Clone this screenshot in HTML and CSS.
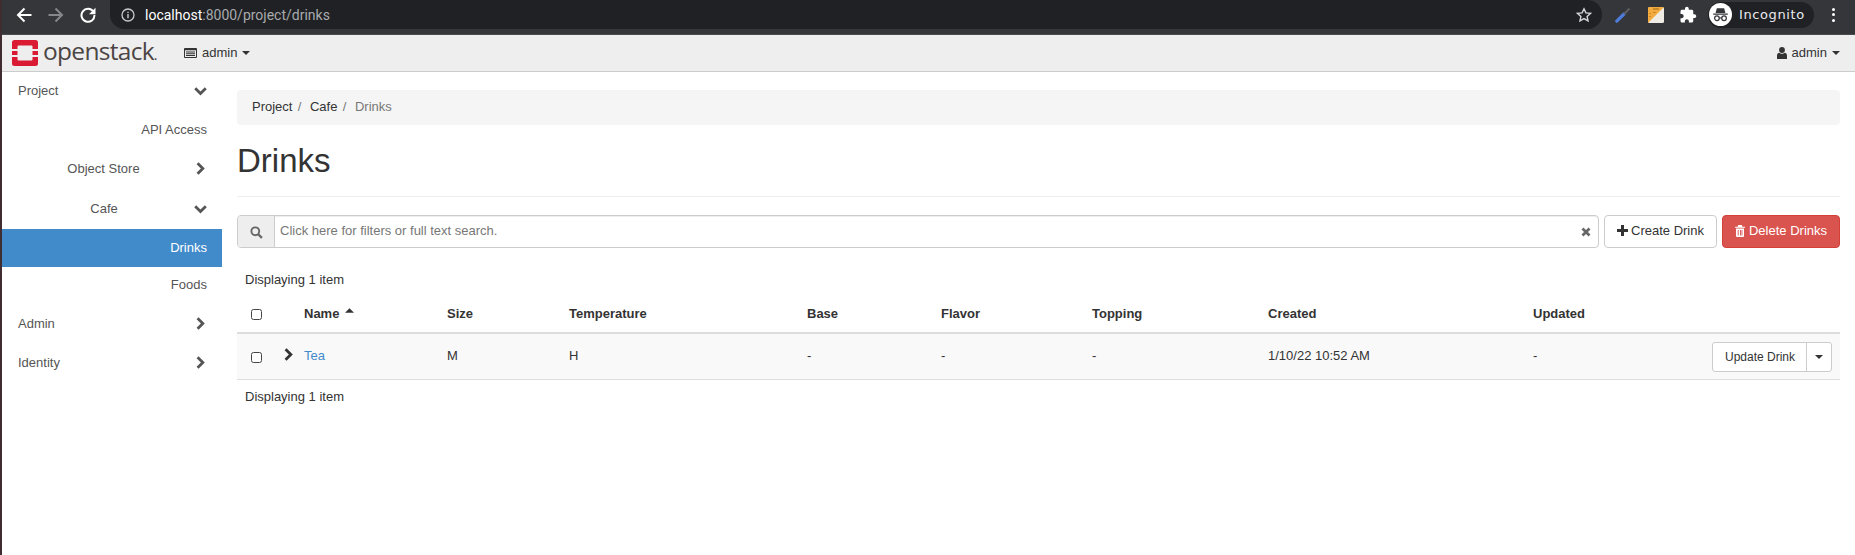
FILE: index.html
```html
<!DOCTYPE html>
<html lang="en">
<head>
<meta charset="utf-8">
<title>Drinks</title>
<link rel="stylesheet" href="styles.css">
</head>
<body>
<svg class="defs" width="0" height="0" aria-hidden="true">
  <symbol id="chev-right" viewBox="0 0 12 16"><path d="M3 1.500 9.500 8 3 14.500" fill="none" stroke="currentColor" stroke-width="3.400"/></symbol>
  <symbol id="chev-down" viewBox="0 0 16 12"><path d="M1.500 2.500 8 9l6.500-6.500" fill="none" stroke="currentColor" stroke-width="3.400"/></symbol>
  <symbol id="caret" viewBox="0 0 8 4"><path d="M0 0h8L4 4z" fill="currentColor"/></symbol>
</svg>
<header class="chrome">
  <div class="chrome-nav">
    <svg class="c-icon" viewBox="0 0 16 16"><path d="M15.500 8H2M8.500 1.500 2 8l6.500 6.500" fill="none" stroke="#fff" stroke-width="2"/></svg>
    <svg class="c-icon" viewBox="0 0 16 16"><path d="M.5 8H14M7.500 1.500 14 8l-6.500 6.500" fill="none" stroke="#85878a" stroke-width="2"/></svg>
    <svg class="c-icon" viewBox="0 0 16 16"><path d="M13.500 4.800A6.500 6.500 0 1 0 14.500 8" fill="none" stroke="#fff" stroke-width="2"/><path d="M15.500 .8v6.400H9z" fill="#fff"/></svg>
  </div>
  <div class="omnibox">
    <svg class="info" viewBox="0 0 14 14"><circle cx="7" cy="7" r="6" fill="none" stroke="#c8cacd" stroke-width="1.300"/><path d="M6.300 6h1.400v4.200H6.300zM6.300 3.700h1.400v1.400H6.300z" fill="#c8cacd"/></svg>
    <span class="url"><span class="url-host">localhost</span>:8000/project/drinks</span>
    <svg class="star" viewBox="0 0 16 16"><path d="m8 1.800 1.900 4.100 4.500.5-3.300 3 .9 4.400L8 11.600l-4 2.200.9-4.400-3.300-3 4.500-.5z" fill="none" stroke="#d5d7da" stroke-width="1.400"/></svg>
  </div>
  <div class="chrome-ext">
    <svg class="ext-pen" viewBox="0 0 16 16"><path d="M1.800 14.200 9 7" stroke="#4f7bd8" stroke-width="3.200" stroke-linecap="round"/><path d="m9 7 5.500-5.500" stroke="#5c5e62" stroke-width="2"/></svg>
    <svg class="ext-note" viewBox="0 0 16 16"><rect width="16" height="16" rx="1.500" fill="#efece6"/><path d="M0 1.500A1.500 1.500 0 0 1 1.500 0H16L0 16z" fill="#f2ab3c"/><path d="M5 1h6v2H5zM1 6h2v1H1zM1 9h2v1H1zM5 5h3v1H5z" fill="#c98a2b"/></svg>
    <svg class="ext-puzzle" viewBox="0 0 24 24"><path d="M20.500 11H19V7c0-1.100-.9-2-2-2h-4V3.500C13 2.120 11.880 1 10.500 1S8 2.120 8 3.500V5H4c-1.100 0-1.990.9-1.990 2v3.800H3.500c1.490 0 2.700 1.210 2.700 2.700s-1.210 2.700-2.700 2.700H2V20c0 1.100.9 2 2 2h3.800v-1.500c0-1.490 1.210-2.700 2.700-2.700 1.490 0 2.700 1.210 2.700 2.700V22H17c1.100 0 2-.9 2-2v-4h1.500c1.380 0 2.500-1.120 2.500-2.500S21.880 11 20.500 11z" fill="#fff"/></svg>
    <div class="incognito">
      <span class="inc-avatar">
        <svg viewBox="0 0 22 22"><path d="M7.500 5h7l1.200 4.500H6.300zM4 10h14v1.200H4z" fill="#35363a"/><circle cx="7.600" cy="14.600" r="2.200" fill="none" stroke="#35363a" stroke-width="1.200"/><circle cx="14.400" cy="14.600" r="2.200" fill="none" stroke="#35363a" stroke-width="1.200"/><path d="M9.800 14.300h2.400" stroke="#35363a" stroke-width="1.100"/></svg>
      </span>
      <span class="inc-label">Incognito</span>
    </div>
    <div class="kebab"><i></i><i></i><i></i></div>
  </div>
</header>
<nav class="navbar">
  <div class="brand">
    <svg class="brand-mark" viewBox="0 0 26 26"><path d="M2.500 0h21A2.500 2.500 0 0 1 26 2.500V9h-5.500V6.500a1 1 0 0 0-1-1h-13a1 1 0 0 0-1 1V9H0V2.500A2.500 2.500 0 0 1 2.500 0zM0 11h5.500v4H0zM20.500 11H26v4h-5.500zM0 17h5.500v2.500a1 1 0 0 0 1 1h13a1 1 0 0 0 1-1V17H26v6.500a2.500 2.500 0 0 1-2.500 2.500h-21A2.500 2.500 0 0 1 0 23.500z" fill="#da1a32"/></svg>
    <span class="brand-text">openstack<span class="brand-dot">.</span></span>
  </div>
  <div class="nav-menu">
    <svg class="nav-table" viewBox="0 0 13 10"><path fill-rule="evenodd" d="M1 0h11a1 1 0 0 1 1 1v8a1 1 0 0 1-1 1H1a1 1 0 0 1-1-1V1a1 1 0 0 1 1-1zm0 2.200V9h11V2.200zM2 3.400h9v1H2zm0 1.800h9v1H2zm0 1.800h9v1H2z" fill="#333"/></svg>
    <span>admin</span>
    <svg class="caret"><use href="#caret"/></svg>
  </div>
  <div class="nav-menu nav-user">
    <svg class="nav-person" viewBox="0 0 10 12"><circle cx="5" cy="3" r="2.900" fill="#333"/><path d="M0 12V8.500C0 7 1 6 2.400 5.800 3 6.400 4 6.800 5 6.800s2-.4 2.600-1C9 6 10 7 10 8.500V12z" fill="#333"/></svg>
    <span>admin</span>
    <svg class="caret"><use href="#caret"/></svg>
  </div>
</nav>
<div class="layout">
  <aside class="sidebar">
    <a class="side-row side-top"><span class="side-label">Project</span><svg class="chev-d"><use href="#chev-down"/></svg></a>
    <a class="side-row side-leaf">API Access</a>
    <a class="side-row side-sub"><span class="side-label">Object Store</span><svg class="chev-r"><use href="#chev-right"/></svg></a>
    <a class="side-row side-sub side-open"><span class="side-label">Cafe</span><svg class="chev-d"><use href="#chev-down"/></svg></a>
    <a class="side-row side-leaf side-active">Drinks</a>
    <a class="side-row side-leaf side-foods">Foods</a>
    <a class="side-row side-top"><span class="side-label">Admin</span><svg class="chev-r"><use href="#chev-right"/></svg></a>
    <a class="side-row side-top"><span class="side-label">Identity</span><svg class="chev-r"><use href="#chev-right"/></svg></a>
  </aside>
  <main class="content">
    <ol class="breadcrumb">
      <li>Project</li><li class="sep">/</li><li>Cafe</li><li class="sep">/</li><li class="crumb-current">Drinks</li>
    </ol>
    <h1 class="page-title">Drinks</h1>
    <div class="toolbar">
      <div class="search">
        <span class="search-addon">
          <svg viewBox="0 0 13 13"><circle cx="5.300" cy="5.300" r="3.900" fill="none" stroke="#666" stroke-width="1.900"/><path d="m8.200 8.200 3.700 3.700" stroke="#666" stroke-width="2.300"/></svg>
        </span>
        <span class="search-text">Click here for filters or full text search.</span>
        <svg class="search-clear" viewBox="0 0 10 10"><path d="m1.500 1.500 7 7m0-7-7 7" stroke="#666" stroke-width="2.700"/></svg>
      </div>
      <button class="btn">
        <svg class="btn-icon" viewBox="0 0 11 11"><path d="M4 0h3v4h4v3H7v4H4V7H0V4h4z" fill="#333"/></svg>Create Drink
      </button>
      <button class="btn btn-danger">
        <svg class="btn-icon" viewBox="0 0 10 12"><path fill-rule="evenodd" d="M3.300 0h3.400l.8 1.700H10v1H0v-1h2.500zM1 3.500h8V11a1 1 0 0 1-1 1H2a1 1 0 0 1-1-1zM2.700 5v5.500h.9V5zm2.300 0v5.500h.9V5zm1.500 0v5.500h.9V5z" fill="#fff"/></svg>Delete Drinks
      </button>
    </div>
    <div class="count count-top">Displaying 1 item</div>
    <table class="grid">
      <colgroup>
        <col class="c-sel"><col class="c-exp"><col class="c-name"><col class="c-size"><col class="c-temp"><col class="c-base"><col class="c-flav"><col class="c-top"><col class="c-crea"><col class="c-upd"><col>
      </colgroup>
      <thead>
        <tr>
          <th><span class="check"></span></th><th></th>
          <th>Name <svg class="sort"><use href="#caret"/></svg></th>
          <th>Size</th><th>Temperature</th><th>Base</th><th>Flavor</th><th>Topping</th><th>Created</th><th>Updated</th><th></th>
        </tr>
      </thead>
      <tbody>
        <tr>
          <td><span class="check"></span></td>
          <td class="exp-cell"><svg class="chev-exp"><use href="#chev-right"/></svg></td>
          <td><a class="link">Tea</a></td>
          <td>M</td><td>H</td><td>-</td><td>-</td><td>-</td><td>1/10/22 10:52 AM</td><td>-</td>
          <td class="act-cell">
            <div class="split"><span class="split-main">Update Drink</span><span class="split-caret"><svg class="caret"><use href="#caret"/></svg></span></div>
          </td>
        </tr>
      </tbody>
    </table>
    <div class="count count-bottom">Displaying 1 item</div>
  </main>
</div>
</body>
</html>
```
FILE: styles.css
```css
* { box-sizing: border-box; }
html, body { height: 100%; }
body {
  margin: 0;
  border-left: 2px solid #3f2d32;
  background: #fff;
  color: #333;
  font: 13px/18px "Liberation Sans", Arial, sans-serif;
  overflow: hidden;
}
.defs { position: absolute; }

/* browser chrome */
.chrome {
  height: 35px;
  background: #35363a;
  border-bottom: 1px solid #4a4b4f;
  display: flex;
  align-items: flex-start;
}
.chrome-nav {
  width: 108px;
  height: 29px;
  padding-left: 14px;
  display: flex;
  align-items: center;
  gap: 16px;
}
.c-icon { width: 16px; height: 16px; flex: none; }
.omnibox {
  width: 1492px;
  height: 29px;
  background: #202124;
  border-radius: 0 15px 15px 15px;
  display: flex;
  align-items: center;
  padding: 0 10px 0 11px;
}
.info { width: 14px; height: 14px; flex: none; }
.url {
  margin-left: 10px;
  flex: 1;
  font: 14px/20px Roboto, sans-serif;
  color: #a8abae;
}
.url-host { color: #fff; }
.star { width: 16px; height: 16px; flex: none; }
.chrome-ext { display: flex; align-items: center; height: 29px; flex: 1; padding-left: 13px; }
.ext-pen { width: 16px; height: 16px; }
.ext-note { width: 16px; height: 16px; margin-left: 17px; }
.ext-puzzle { width: 18px; height: 18px; margin-left: 15px; }
.incognito {
  margin-left: 11px;
  width: 106px;
  height: 26px;
  background: #202124;
  border-radius: 13px;
  display: flex;
  align-items: center;
  gap: 7px;
}
.inc-avatar {
  width: 23px;
  height: 23px;
  background: #fff;
  border-radius: 50%;
  flex: none;
  margin-left: 1px;
  display: flex;
}
.inc-avatar svg { width: 23px; height: 23px; }
.inc-label {
  font: 13px/18px "DejaVu Sans", sans-serif;
  letter-spacing: 0.6px;
  color: #e8eaed;
}
.kebab { margin-left: 18px; display: flex; flex-direction: column; gap: 2.500px; }
.kebab i { width: 3px; height: 3px; border-radius: 50%; background: #fff; }

/* navbar */
.navbar {
  height: 37px;
  background: #eee;
  border-bottom: 1px solid #ccc;
  display: flex;
  align-items: center;
  padding: 0 15px 0 10px;
}
.brand { display: flex; align-items: center; width: 172px; }
.brand-mark { width: 26px; height: 26px; flex: none; }
.brand-text {
  margin-left: 5px;
  font: 500 24.500px/30px "Open Sans", sans-serif;
  letter-spacing: -0.7px;
  color: #4b4544;
}
.brand-dot { font-size: 14px; }
.nav-menu { display: flex; align-items: center; color: #333; }
.nav-table { width: 13px; height: 10px; margin-right: 5px; }
.nav-person { width: 10px; height: 12px; margin-right: 5px; }
.nav-user { margin-left: auto; }
.caret { width: 8px; height: 4px; margin-left: 5px; flex: none; }

/* sidebar */
.layout { display: flex; }
.sidebar { width: 220px; flex: none; margin-top: -1px; color: #555; }
.side-row { height: 39px; display: flex; align-items: center; }
.side-top { padding: 0 16px; }
.side-top .side-label { flex: 1; }
.side-sub { padding: 0 16px; }
.side-sub .side-label { flex: 1; text-align: center; padding-right: 4px; }
.side-open { height: 41px; }
.side-leaf { justify-content: flex-end; padding-right: 15px; }
.side-active { height: 38px; background: #428bca; color: #fff; }
.side-foods { height: 37px; padding-bottom: 2px; }
.chev-d { width: 13px; height: 10px; flex: none; margin-right: -1px; color: #555; }
.chev-r { width: 10px; height: 13px; flex: none; margin: 0 1px 0 2px; color: #555; }

/* content */
.content { flex: 1; min-width: 0; padding: 18px 15px 0; }
.breadcrumb {
  list-style: none;
  margin: 0;
  height: 35px;
  padding: 0 15px 2px;
  background: #f5f5f5;
  border-radius: 4px;
  display: flex;
  align-items: center;
}
.sep { color: #777; margin: 0 8.500px 0 5.400px; }
.crumb-current { color: #777; }
.page-title {
  margin: 0;
  height: 72px;
  padding-top: 18px;
  font-size: 33px;
  line-height: 36px;
  font-weight: 400;
  border-bottom: 1px solid #eee;
}
.toolbar { display: flex; gap: 5px; margin-top: 18px; height: 33px; }
.search {
  flex: 1;
  display: flex;
  align-items: center;
  border: 1px solid #ccc;
  border-radius: 4px;
  box-shadow: inset 0 1px 1px rgba(0, 0, 0, .075);
}
.search-addon {
  width: 37px;
  height: 100%;
  background: #eee;
  border-right: 1px solid #ccc;
  border-radius: 3px 0 0 3px;
  display: flex;
  align-items: center;
  justify-content: center;
  flex: none;
}
.search-addon svg { width: 13px; height: 13px; margin-top: 1px; }
.search-text { flex: 1; padding: 0 0 2px 5px; color: #777; }
.search-clear { width: 10px; height: 10px; margin: 1px 7px 0 0; flex: none; }
.btn {
  font: inherit;
  color: #333;
  background: #fff;
  border: 1px solid #ccc;
  border-radius: 4px;
  padding: 0 12px 2px;
  height: 33px;
  display: flex;
  align-items: center;
  white-space: nowrap;
}
.btn-icon { width: 11px; height: 11px; margin-right: 3px; flex: none; }
.btn-danger { background: #d9534f; border-color: #d43f3a; color: #fff; }
.btn-danger .btn-icon { width: 10px; height: 12px; margin-right: 4px; }

.count { padding-left: 8px; color: #333; }
.count-top { margin-top: 23px; }
.count-bottom { margin-top: 8px; }

.grid { width: 100%; table-layout: fixed; border-collapse: collapse; margin-top: 9px; }
.c-sel { width: 40px; }
.c-exp { width: 19px; }
.c-name { width: 143px; }
.c-size { width: 122px; }
.c-temp { width: 238px; }
.c-base { width: 134px; }
.c-flav { width: 151px; }
.c-top { width: 176px; }
.c-crea { width: 265px; }
.c-upd { width: 180px; }
th, td { padding: 0 8px; text-align: left; vertical-align: middle; }
th { height: 35px; padding-bottom: 2px; border-bottom: 2px solid #ddd; font-weight: 700; }
td { height: 46px; padding-bottom: 1px; background: #f9f9f9; border-bottom: 1px solid #ddd; }
.check {
  display: block;
  width: 11px;
  height: 11px;
  margin-left: 6px;
  background: #fff;
  border: 1px solid #444;
  border-radius: 2.500px;
}
td .check { margin-top: 3px; }
.exp-cell { padding: 0; }
.chev-exp { display: block; width: 10px; height: 13px; color: #333; margin: -3px 0 0 6px; }
.sort { width: 9px; height: 5px; vertical-align: 5px; margin-left: 2px; transform: rotate(180deg); }
.link { color: #428bca; }
.act-cell { padding: 0 8px 0 0; }
.split {
  display: flex;
  float: right;
  height: 30px;
  margin-top: 1px;
  background: #fff;
  border: 1px solid #ccc;
  border-radius: 3px;
  font-size: 12px;
}
.split-main { padding: 0 11px 0 12px; display: flex; align-items: center; border-right: 1px solid #ccc; }
.split-caret { width: 24px; display: flex; align-items: center; justify-content: center; }
.split-caret .caret { margin: 0; }
```
